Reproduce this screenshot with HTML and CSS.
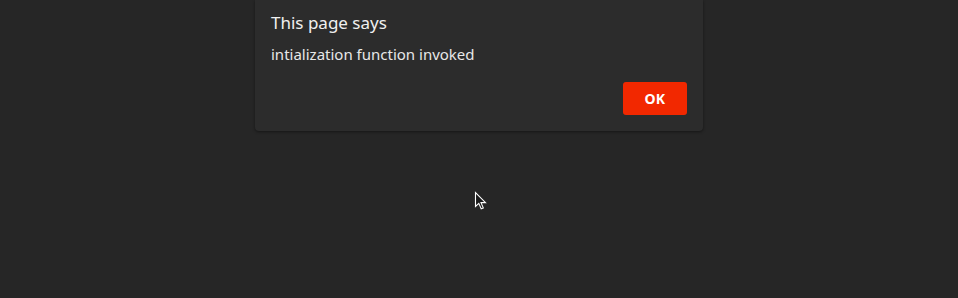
FILE: index.html
```html
<!DOCTYPE html>
<html>
<head>
<meta charset="utf-8">
<link rel="stylesheet" href="styles.css">
</head>
<body>
<div class="page">
  <div class="dialog">
    <div class="title">This page says</div>
    <div class="message">intialization function invoked</div>
    <div class="actions"><button class="ok">OK</button></div>
  </div>
  <svg class="cursor" width="13" height="20" viewBox="0 0 13 20">
    <path d="M1.5 1.5 L1.5 15.5 L4.8 12.4 L7.2 17.8 L9.3 16.9 L7 11.6 L11.5 11.6 Z" fill="#1a1a1a" stroke="#ffffff" stroke-width="1.1" stroke-linejoin="miter"/>
  </svg>
</div>
</body>
</html>
```
FILE: styles.css
```css
html, body {
  margin: 0;
  padding: 0;
  background: #262626;
}
.page {
  position: relative;
  width: 958px;
  height: 298px;
  display: flex;
  justify-content: center;
  font-family: "Noto Sans", "Open Sans", sans-serif;
}
.dialog {
  width: 448px;
  height: 131px;
  box-sizing: border-box;
  background: #2c2c2c;
  border-radius: 0 0 4px 4px;
  box-shadow: 0 1px 3px rgba(0,0,0,0.45);
  padding: 11px 16px 0 16px;
  display: flex;
  flex-direction: column;
}
.title {
  color: #f0f0f0;
  font-size: 17px;
  line-height: 23px;
}
.message {
  color: #e8e8e8;
  font-size: 15px;
  line-height: 20px;
  margin-top: 10px;
}
.actions {
  display: flex;
  justify-content: flex-end;
  margin-top: 18px;
}
.ok {
  width: 64px;
  height: 33px;
  border: none;
  border-radius: 3px;
  background: #f22800;
  color: #ffffff;
  font-family: "Noto Sans", "Open Sans", sans-serif;
  font-weight: 700;
  font-size: 14px;
  letter-spacing: 0.3px;
  padding: 0;
}
.cursor {
  position: absolute;
  left: 474px;
  top: 191px;
}
```
